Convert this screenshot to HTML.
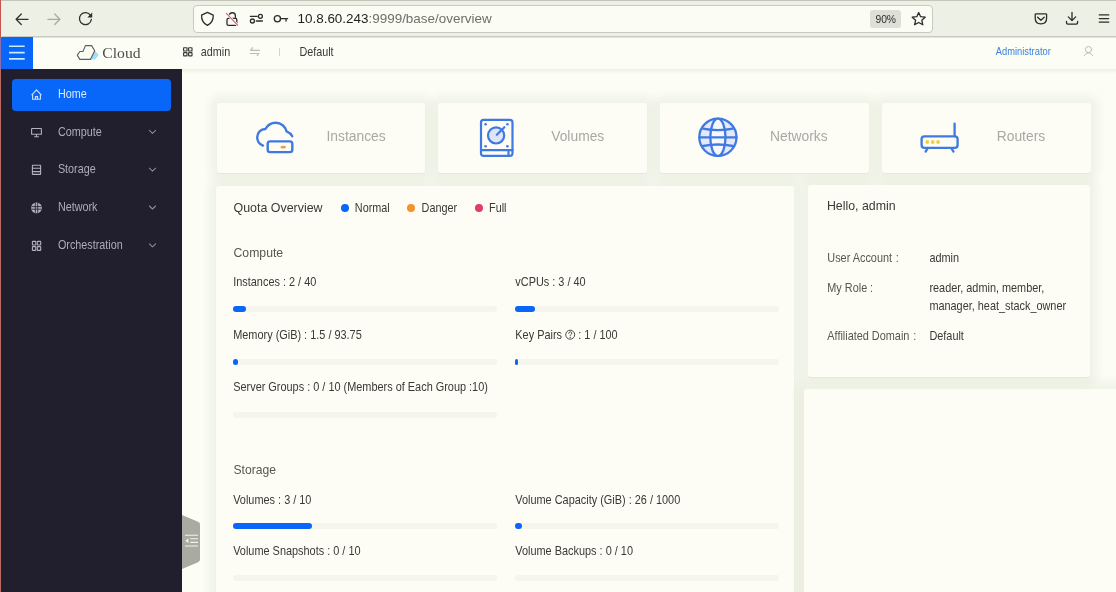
<!DOCTYPE html>
<html><head><meta charset="utf-8">
<style>
*{box-sizing:border-box}
html,body{margin:0;padding:0}
body{width:1116px;height:592px;overflow:hidden;position:relative;background:#fcfdf5;font-family:"Liberation Sans",sans-serif;color:#3a3a34}
.abs{position:absolute}
.t{position:absolute;white-space:nowrap;line-height:1;will-change:transform}
.card{background:#fdfdf6;border-radius:3px;box-shadow:0 1px 1px rgba(50,80,20,0.05),0 0 8px 7px rgba(55,90,20,0.06)}
.bar{height:6px;border-radius:3px;background:#f4f5ec}
.fill{height:6px;border-radius:3px;background:#0866f8}
.help{display:inline-block;width:9.6px;height:9.6px;border:1px solid #3a3a34;border-radius:50%;font-size:7.5px;line-height:8px;text-align:center;vertical-align:-1px;margin:0 1px}
</style></head><body>
<div class="abs" style="left:0;top:0;width:1116px;height:37px;background:#edf0e5;border-bottom:1px solid #c8cabf"></div><div class="abs" style="left:0;top:0;width:1116px;height:1.4px;background:#c3c5ba"></div><div class="abs" style="left:193.3px;top:5px;width:739.5px;height:28px;background:#fbfcf4;border:1px solid #c8cac0;border-radius:4px"></div><svg class="abs" style="left:0;top:0" width="120" height="37" viewBox="0 0 120 37">
<g fill="none" stroke="#33332e" stroke-width="1.25" stroke-linecap="round" stroke-linejoin="round">
<path d="M16.3 19.3H28.1M21.3 14L16.1 19.3L21.3 24.5"/>
</g>
<g fill="none" stroke="#a8aaa2" stroke-width="1.25" stroke-linecap="round" stroke-linejoin="round">
<path d="M47.9 19.3H59.7M54.7 14L59.9 19.3L54.7 24.5"/>
</g>
<g fill="none" stroke="#33332e" stroke-width="1.3" stroke-linecap="round">
<path d="M90.6 15.6A6 6 0 1 0 91.4 19.3"/>
</g>
<path d="M92.2 12.6L92.2 17.4L87.4 17.4Z" fill="#2c2c28"/>
</svg><svg class="abs" style="left:190px;top:0" width="110" height="37" viewBox="190 0 110 37">
<g fill="none" stroke="#2c2c28" stroke-width="1.3" stroke-linejoin="round" stroke-linecap="round">
<path d="M207.4 12.4L201.6 15.2Q201.2 22 207.4 25.4Q213.6 22 213.2 15.2Z"/>
<path d="M229.3 18.3V15.8A3.05 3.05 0 0 1 235.4 15.8V18.3"/>
<rect x="227" y="18.3" width="9.8" height="7.1" rx="1.4"/>
<path d="M250.3 16.3H257.2M256.3 21H262.4"/>
<circle cx="260.4" cy="16.3" r="2"/>
<circle cx="252.4" cy="21" r="2"/>
<circle cx="277.4" cy="18.8" r="3.1"/>
<path d="M280.5 18.6H287.6M286 18.6V21"/>
</g>
<path d="M226.4 13.4L237.6 25.2" stroke="#fbfcf4" stroke-width="2.6"/>
<path d="M226.4 13.4L237.6 25.2" stroke="#d9607c" stroke-width="1.2" stroke-linecap="round"/>
</svg><div class="abs" style="left:870px;top:10px;width:30.5px;height:17.5px;background:#dedfd7;border-radius:3px"></div><svg class="abs" style="left:900px;top:0" width="216" height="37" viewBox="900 0 216 37">
<g fill="none" stroke="#2c2c28" stroke-width="1.3" stroke-linejoin="round" stroke-linecap="round">
<path d="M918.7 12.5L920.6 16.7L925.2 17.2L921.8 20.3L922.8 24.8L918.7 22.5L914.6 24.8L915.6 20.3L912.2 17.2L916.8 16.7Z"/>
<path d="M1036 13.8H1045.8Q1046.6 13.8 1046.6 14.6V18.2Q1046.6 23.8 1040.9 23.8Q1035.2 23.8 1035.2 18.2V14.6Q1035.2 13.8 1036 13.8Z"/>
<path d="M1037.6 17.2L1040.9 20.2L1044.2 17.2"/>
<path d="M1072 12.4V20.6M1068.3 16.9L1072 20.6L1075.7 16.9"/>
<path d="M1066.5 21.4V22.8Q1066.5 24.2 1067.9 24.2H1076.2Q1077.6 24.2 1077.6 22.8V21.4"/>
</g>
<g stroke="#2c2c28" stroke-width="1.3" stroke-linecap="round">
<path d="M1099.3 14.9H1108.7M1099.3 18.6H1108.7M1099.3 22.2H1108.7"/>
</g>
</svg><div class="abs" style="left:0;top:37px;width:1116px;height:32px;background:#fcfdf5"></div><div class="abs" style="left:0;top:37px;width:1116px;height:1px;background:#e3e5db"></div><div class="abs" style="left:1px;top:37px;width:31.5px;height:32px;background:#0866f8"></div><svg class="abs" style="left:0;top:37px" width="32" height="32" viewBox="0 37 32 32">
<g stroke="#c9eaff" stroke-width="1.6"><path d="M9 46.3H24.7M9 52.6H24.7M9 58.9H24.7"/></g>
</svg><svg class="abs" style="left:70px;top:40px" width="32" height="24" viewBox="70 40 32 24">
<defs><clipPath id="hc"><path d="M94.7 50.8L99 55.1L96.6 59.4H90.4Z"/></clipPath></defs>
<g clip-path="url(#hc)" stroke="#8fd3f0" stroke-width="1.35">
<path d="M87.6 61.4L98.6 48.6M89.9 61.4L100.9 48.6M92.2 61.4L103.2 48.6M85.3 61.4L96.3 48.6"/>
</g>
<path d="M77.3 55.1L79.8 51.5H83L85.4 45.6H91.6L94.7 50.8L90.4 59.4H79.8Z" fill="none" stroke="#5e5e58" stroke-width="1.1" stroke-linejoin="round"/>
</svg><svg class="abs" style="left:178px;top:42px" width="110" height="20" viewBox="178 42 110 20">
<g fill="none" stroke="#3a3a36" stroke-width="1.15">
<rect x="183.6" y="47.7" width="3.4" height="3.3" rx="0.3"/>
<rect x="188.6" y="47.7" width="3.4" height="3.3" rx="0.3"/>
<rect x="183.6" y="52.6" width="3.4" height="3.3" rx="0.3"/>
<rect x="188.6" y="52.6" width="3.4" height="3.3" rx="0.3"/>
</g>
<g fill="none" stroke="#bcbcb4" stroke-width="1.1" stroke-linecap="round" stroke-linejoin="round">
<path d="M252.6 47.6L250.6 50.4H259.4M250.2 53.5H259L257.2 55.6"/>
</g>
<path d="M279.5 48.2V56" stroke="#d4d5cc" stroke-width="1"/>
</svg><svg class="abs" style="left:1078px;top:42px" width="20" height="20" viewBox="1078 42 20 20">
<g fill="none" stroke="#bdbdb5" stroke-width="1" stroke-linecap="round">
<circle cx="1088.5" cy="49.6" r="3.1"/>
<path d="M1084.3 55.6Q1086 52.8 1088.5 52.8Q1091 52.8 1092.7 55.6"/>
</g>
</svg><div class="abs" style="left:1px;top:69px;width:181px;height:523px;background:#211e2d"></div><div class="abs" style="left:12px;top:79px;width:158.5px;height:32px;background:#0866f8;border-radius:4px"></div><svg class="abs" style="left:0;top:69px" width="182" height="200" viewBox="0 69 182 200">
<g fill="none" stroke="#cfe3ff" stroke-width="1.1" stroke-linejoin="round">
<path d="M31.6 95.2L36.5 89.9L41.4 95.2M32.6 94.2V99.3H40.4V94.2"/>
<path d="M35.4 99.3V96.6H37.6V99.3"/>
</g>
<g fill="none" stroke="#b3b0c2" stroke-width="1.1" stroke-linejoin="round">
<rect x="31.6" y="128.5" width="9.8" height="5.8" rx="0.4"/>
<path d="M36.5 134.3V136.6M34.2 136.8H38.8"/>
<rect x="32.4" y="165.2" width="8.2" height="9.2" rx="0.3"/>
<path d="M32.4 168.3H40.6M32.4 171.6H40.6"/>
<circle cx="36.5" cy="207.9" r="5.4" fill="#b3b0c2" stroke="none"/>
<path d="M35.3 203V212.8M37.7 203V212.8M31.4 206.6H41.6M31.4 209.2H41.6" stroke="#211e2d" stroke-width="0.85"/>
<rect x="32.4" y="241.4" width="3.4" height="3.6" rx="0.5"/>
<rect x="37.3" y="241.4" width="3.4" height="3.6" rx="0.5"/>
<rect x="32.4" y="246.6" width="3.4" height="3.8" rx="0.5"/>
<rect x="37.3" y="246.6" width="3.4" height="3.8" rx="0.5"/>
</g>
<g fill="none" stroke="#8e8b9d" stroke-width="1.05" stroke-linecap="round" stroke-linejoin="round">
<path d="M149.4 130.4L152.5 133.4L155.6 130.4"/>
<path d="M149.4 168.2L152.5 171.2L155.6 168.2"/>
<path d="M149.4 206L152.5 209L155.6 206"/>
<path d="M149.4 243.8L152.5 246.8L155.6 243.8"/>
</g>
</svg><div class="abs" style="left:182px;top:69px;width:934px;height:5px;background:linear-gradient(rgba(50,60,20,0.07),rgba(50,60,20,0))"></div><svg class="abs" style="left:182px;top:512px" width="22" height="60" viewBox="182 512 22 60">
<path d="M182 515L198 521.8Q200 522.6 200 524.5V559.5Q200 561.4 198 562.2L182 569Z" fill="#a9aaa2"/>
<g stroke="#f2f3ea" stroke-width="1.1"><path d="M185 535.2H198M190.2 538.8H198M190.2 542.4H198M185 546H198"/></g>
<path d="M188.4 538.2V543.2L185.4 540.7Z" fill="#f2f3ea"/>
</svg><div class="abs card" style="left:216.6px;top:103px;width:208.5px;height:70.3px"></div><div class="abs card" style="left:438.4px;top:103px;width:208.5px;height:70.3px"></div><div class="abs card" style="left:660.3px;top:103px;width:208.5px;height:70.3px"></div><div class="abs card" style="left:882.1px;top:103px;width:208.5px;height:70.3px"></div><svg class="abs" style="left:240px;top:110px" width="740" height="55" viewBox="240 110 740 55">
<g fill="none" stroke="#3f7ae0" stroke-width="2.4" stroke-linecap="round" stroke-linejoin="round">
<path d="M263 145.6C259.6 144.2 257.2 141 257.2 137.2C257.2 132.6 260.8 129.2 265.4 129C267.6 125 271.4 122.8 275.8 122.8C281 122.8 285.4 126.6 286.6 131.4C289.4 132.6 291.2 134.2 292.2 136.3"/>
<rect x="267.7" y="141.4" width="24.6" height="10.7" rx="2.4"/>
</g>
<ellipse cx="283.2" cy="147.2" rx="2.8" ry="1.4" fill="#e9a03c"/>
<g fill="none" stroke="#3f7ae0" stroke-width="2.2" stroke-linejoin="round" stroke-linecap="round">
<rect x="481" y="119.8" width="31.5" height="36" rx="2.6"/>
<path d="M481 150.2H512.5M508.5 150.4V155.6"/>
<circle cx="496.1" cy="135.4" r="8.1" fill="#dfe5f9"/>
<path d="M496.8 134.8L504.4 127.2"/>
</g>
<g fill="#3f7ae0"><circle cx="485.6" cy="124.3" r="1.3"/><circle cx="507.4" cy="124.3" r="1.3"/><circle cx="485.6" cy="146.2" r="1.3"/><circle cx="507.4" cy="146.2" r="1.3"/></g>
<g fill="none" stroke="#3f7ae0" stroke-width="2.3" stroke-linecap="round">
<circle cx="717.9" cy="137.3" r="18.6" fill="#e4e8f8"/>
<ellipse cx="717.9" cy="137.3" rx="7.6" ry="18.6" fill="#f6f8fd"/>
<path d="M699.3 137.3H736.5M703 128.6Q717.9 131.6 732.8 128.6M703 146Q717.9 143 732.8 146"/>
</g>
<g fill="none" stroke="#3f7ae0" stroke-width="2.3" stroke-linecap="round" stroke-linejoin="round">
<rect x="921.6" y="136.3" width="36" height="11.6" rx="2.8"/>
<path d="M954.6 123.6V136.2M927.3 148.8L925.6 151.6M951.8 148.8L953.5 151.6"/>
</g>
<g fill="#f0d040"><circle cx="927.3" cy="142" r="1.9"/><circle cx="932.7" cy="142" r="1.9"/><circle cx="938.1" cy="142" r="1.9"/></g>
</svg><div class="abs card" style="left:216px;top:185.7px;width:577.7px;height:420px"></div><div class="abs" style="left:340.9px;top:204.0px;width:7.8px;height:7.8px;border-radius:50%;background:#0866f8"></div><div class="abs" style="left:407.4px;top:204.0px;width:7.8px;height:7.8px;border-radius:50%;background:#f5932a"></div><div class="abs" style="left:474.8px;top:204.0px;width:7.8px;height:7.8px;border-radius:50%;background:#e23e62"></div><div class="abs bar" style="left:233.2px;top:306.3px;width:263.5px"></div><div class="abs fill" style="left:233.2px;top:306.3px;width:13px"></div><div class="abs bar" style="left:515.3px;top:306.3px;width:263.5px"></div><div class="abs fill" style="left:515.3px;top:306.3px;width:20px"></div><div class="abs bar" style="left:233.2px;top:359.0px;width:263.5px"></div><div class="abs fill" style="left:233.2px;top:359.0px;width:4.5px"></div><div class="abs bar" style="left:515.3px;top:359.0px;width:263.5px"></div><div class="abs fill" style="left:515.3px;top:359.0px;width:3.2px"></div><div class="abs bar" style="left:233.2px;top:411.8px;width:263.5px"></div><div class="abs bar" style="left:233.2px;top:523.3px;width:263.5px"></div><div class="abs fill" style="left:233.2px;top:523.3px;width:79px"></div><div class="abs bar" style="left:515.3px;top:523.3px;width:263.5px"></div><div class="abs fill" style="left:515.3px;top:523.3px;width:6.5px"></div><div class="abs bar" style="left:233.2px;top:575.4px;width:263.5px"></div><div class="abs bar" style="left:515.3px;top:575.4px;width:263.5px"></div><svg class="abs" style="left:564px;top:328px" width="13" height="13" viewBox="564 328 13 13">
<circle cx="570.2" cy="334.7" r="4.5" fill="none" stroke="#3a3a34" stroke-width="0.9"/>
<path d="M568.7 333.4Q568.8 331.8 570.3 331.8Q571.8 331.9 571.8 333.2Q571.8 334.1 570.8 334.6Q570.2 334.9 570.2 335.8" fill="none" stroke="#3a3a34" stroke-width="0.85" stroke-linecap="round"/>
<circle cx="570.2" cy="337.4" r="0.55" fill="#3a3a34"/>
</svg><div class="abs card" style="left:804px;top:388.5px;width:330px;height:300px"></div><div class="abs card" style="left:808.3px;top:184.5px;width:281.5px;height:192.2px"></div><div class="abs" style="left:0;top:0;width:1px;height:37px;background:#c2584c"></div><div class="abs" style="left:1px;top:1px;width:1px;height:36px;background:#f8e8df"></div><div class="abs" style="left:0;top:37px;width:1px;height:32px;background:#8f6cae"></div><div class="abs" style="left:0;top:69px;width:1px;height:523px;background:#bb6a62"></div><div class="abs" style="left:1px;top:69px;width:1px;height:523px;background:#3c161a"></div><svg class="abs" style="left:0;top:0;will-change:transform" width="1116" height="592" viewBox="0 0 1116 592">
<text x="297.50" y="23.30" font-family="Liberation Sans" font-size="13.450" fill="#3a3a34"><tspan fill="#1f1f1b">10.8.60.243</tspan><tspan fill="#707069">:9999/base/overview</tspan></text>
<text x="875.50" y="22.90" font-family="Liberation Sans" font-size="10.300" fill="#2c2c28" letter-spacing="-0.1">90%</text>
<text x="0" y="0" transform="translate(102.30 57.60) scale(1.1350 1)" font-family="Liberation Serif" font-size="13.800" fill="#4e4e48">Cloud</text>
<text x="0" y="0" transform="translate(200.80 56.00) scale(0.9091 1)" font-family="Liberation Sans" font-size="11.880" fill="#3a3a34">admin</text>
<text x="0" y="0" transform="translate(299.40 56.00) scale(0.9091 1)" font-family="Liberation Sans" font-size="11.880" fill="#3a3a34">Default</text>
<text x="0" y="0" transform="translate(995.80 54.90) scale(0.9091 1)" font-family="Liberation Sans" font-size="10.285" fill="#3a83de">Administrator</text>
<text x="0" y="0" transform="translate(57.90 97.80) scale(0.9091 1)" font-family="Liberation Sans" font-size="11.880" fill="#d6ecff">Home</text>
<text x="0" y="0" transform="translate(57.90 135.60) scale(0.9091 1)" font-family="Liberation Sans" font-size="11.880" fill="#aeabbc">Compute</text>
<text x="0" y="0" transform="translate(57.90 173.40) scale(0.9091 1)" font-family="Liberation Sans" font-size="11.880" fill="#aeabbc">Storage</text>
<text x="0" y="0" transform="translate(57.90 211.20) scale(0.9091 1)" font-family="Liberation Sans" font-size="11.880" fill="#aeabbc">Network</text>
<text x="0" y="0" transform="translate(57.90 249.00) scale(0.9091 1)" font-family="Liberation Sans" font-size="11.880" fill="#aeabbc">Orchestration</text>
<text x="0" y="0" transform="translate(326.50 141.30) scale(0.9091 1)" font-family="Liberation Sans" font-size="15.235" fill="#a9a9a2">Instances</text>
<text x="0" y="0" transform="translate(551.20 141.30) scale(0.9091 1)" font-family="Liberation Sans" font-size="15.235" fill="#a9a9a2">Volumes</text>
<text x="0" y="0" transform="translate(770.00 141.30) scale(0.9091 1)" font-family="Liberation Sans" font-size="15.235" fill="#a9a9a2">Networks</text>
<text x="0" y="0" transform="translate(996.70 141.30) scale(0.9091 1)" font-family="Liberation Sans" font-size="15.235" fill="#a9a9a2">Routers</text>
<text x="0" y="0" transform="translate(233.50 211.70) scale(0.9091 1)" font-family="Liberation Sans" font-size="13.684" fill="#3a3a34">Quota Overview</text>
<text x="0" y="0" transform="translate(354.80 211.70) scale(0.9091 1)" font-family="Liberation Sans" font-size="11.946" fill="#3a3a34">Normal</text>
<text x="0" y="0" transform="translate(421.60 211.70) scale(0.9091 1)" font-family="Liberation Sans" font-size="11.946" fill="#3a3a34">Danger</text>
<text x="0" y="0" transform="translate(489.00 211.70) scale(0.9091 1)" font-family="Liberation Sans" font-size="11.946" fill="#3a3a34">Full</text>
<text x="0" y="0" transform="translate(233.50 257.30) scale(0.9091 1)" font-family="Liberation Sans" font-size="13.475" fill="#57574f">Compute</text>
<text x="0" y="0" transform="translate(233.50 473.90) scale(0.9091 1)" font-family="Liberation Sans" font-size="13.365" fill="#57574f">Storage</text>
<text x="0" y="0" transform="translate(233.20 286.30) scale(0.9091 1)" font-family="Liberation Sans" font-size="12.023" fill="#3a3a34">Instances : 2 / 40</text>
<text x="0" y="0" transform="translate(515.30 286.30) scale(0.9091 1)" font-family="Liberation Sans" font-size="12.023" fill="#3a3a34">vCPUs : 3 / 40</text>
<text x="0" y="0" transform="translate(233.20 339.40) scale(0.9091 1)" font-family="Liberation Sans" font-size="12.023" fill="#3a3a34">Memory (GiB) : 1.5 / 93.75</text>
<text x="0" y="0" transform="translate(515.30 339.40) scale(0.9091 1)" font-family="Liberation Sans" font-size="12.023" fill="#3a3a34">Key Pairs</text>
<text x="0" y="0" transform="translate(233.20 391.00) scale(0.9091 1)" font-family="Liberation Sans" font-size="12.023" fill="#3a3a34">Server Groups : 0 / 10 (Members of Each Group :10)</text>
<text x="0" y="0" transform="translate(233.20 503.60) scale(0.9091 1)" font-family="Liberation Sans" font-size="12.023" fill="#3a3a34">Volumes : 3 / 10</text>
<text x="0" y="0" transform="translate(515.30 503.60) scale(0.9091 1)" font-family="Liberation Sans" font-size="12.023" fill="#3a3a34">Volume Capacity (GiB) : 26 / 1000</text>
<text x="0" y="0" transform="translate(233.20 555.10) scale(0.9091 1)" font-family="Liberation Sans" font-size="12.023" fill="#3a3a34">Volume Snapshots : 0 / 10</text>
<text x="0" y="0" transform="translate(515.30 555.10) scale(0.9091 1)" font-family="Liberation Sans" font-size="12.023" fill="#3a3a34">Volume Backups : 0 / 10</text>
<text x="0" y="0" transform="translate(578.30 339.40) scale(0.9091 1)" font-family="Liberation Sans" font-size="11.946" fill="#3a3a34">: 1 / 100</text>
<text x="0" y="0" transform="translate(826.90 210.00) scale(0.9091 1)" font-family="Liberation Sans" font-size="13.596" fill="#3a3a34">Hello, admin</text>
<text x="0" y="0" transform="translate(827.30 261.60) scale(0.9091 1)" font-family="Liberation Sans" font-size="11.990" fill="#57574f">User Account</text>
<text x="0" y="0" transform="translate(895.70 261.60) scale(0.9091 1)" font-family="Liberation Sans" font-size="11.990" fill="#57574f">:</text>
<text x="0" y="0" transform="translate(827.30 292.00) scale(0.9091 1)" font-family="Liberation Sans" font-size="11.990" fill="#57574f">My Role</text>
<text x="0" y="0" transform="translate(870.10 292.00) scale(0.9091 1)" font-family="Liberation Sans" font-size="11.990" fill="#57574f">:</text>
<text x="0" y="0" transform="translate(827.30 340.30) scale(0.9091 1)" font-family="Liberation Sans" font-size="11.990" fill="#57574f">Affiliated Domain</text>
<text x="0" y="0" transform="translate(913.20 340.30) scale(0.9091 1)" font-family="Liberation Sans" font-size="11.990" fill="#57574f">:</text>
<text x="0" y="0" transform="translate(929.40 261.60) scale(0.9091 1)" font-family="Liberation Sans" font-size="11.990" fill="#3a3a34">admin</text>
<text x="0" y="0" transform="translate(929.40 292.00) scale(0.9091 1)" font-family="Liberation Sans" font-size="11.990" fill="#3a3a34">reader, admin, member,</text>
<text x="0" y="0" transform="translate(929.40 309.90) scale(0.9091 1)" font-family="Liberation Sans" font-size="11.990" fill="#3a3a34">manager, heat_stack_owner</text>
<text x="0" y="0" transform="translate(929.40 340.30) scale(0.9091 1)" font-family="Liberation Sans" font-size="11.990" fill="#3a3a34">Default</text>
</svg>
</body></html>
